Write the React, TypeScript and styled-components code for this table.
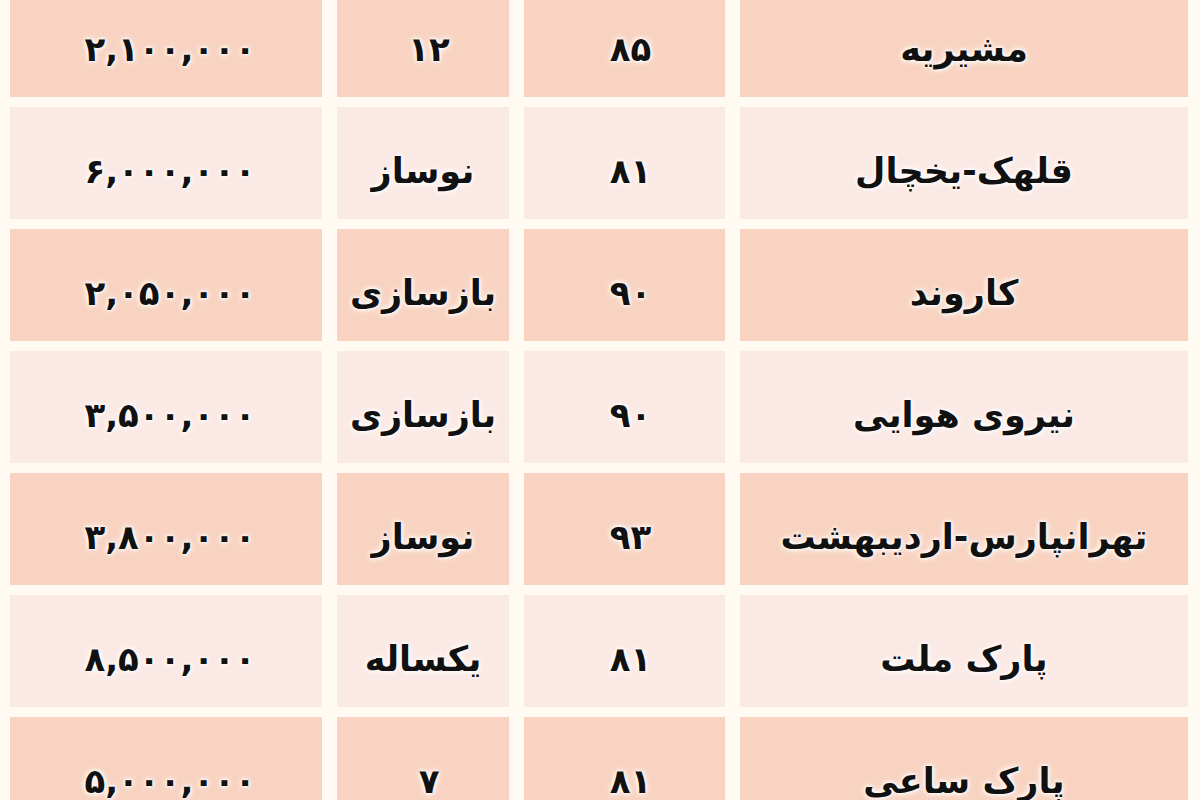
import React from "react";
import styled, { createGlobalStyle } from "styled-components";

const Global = createGlobalStyle`
  html, body {
    margin: 0;
    padding: 0;
    background: #fffaf2;
    height: 800px;
    overflow: hidden;
  }
  #root { height: 800px; overflow: hidden; }
`;

const Table = styled.div`
  direction: rtl;
  display: grid;
  grid-template-columns: 448px 201px 172px 312px;
  grid-auto-rows: 112px;
  column-gap: 15px;
  row-gap: 10px;
  margin-top: -15px;
  padding: 0 12px 0 10px;
  font-family: "DejaVu Sans", "Noto Sans", sans-serif;
`;

const Cell = styled.div<{ $tone: "peach" | "light" }>`
  display: flex;
  align-items: center;
  justify-content: center;
  padding-top: 16px;
  box-sizing: border-box;
  background: ${(p) => (p.$tone === "peach" ? "#f8d3c1" : "#fbe9e5")};
  color: #111;
  font-size: 35px;
  font-weight: bold;
  white-space: nowrap;
  text-shadow: 0 0 3px #fff, 0 0 5px #fff, 0 0 7px #fff;
`;

const Num = styled.span<{ $spacing: number }>`
  direction: ltr;
  unicode-bidi: isolate;
  letter-spacing: ${(p) => p.$spacing}px;
  padding-left: ${(p) => p.$spacing}px;
  font-size: 34px;
`;

type Row = [string, string, string, string];

const rows: Row[] = [
  ["مشیریه", "۸۵", "۱۲", "۲,۱۰۰,۰۰۰"],
  ["قلهک-یخچال", "۸۱", "نوساز", "۶,۰۰۰,۰۰۰"],
  ["کاروند", "۹۰", "بازسازی", "۲,۰۵۰,۰۰۰"],
  ["نیروی هوایی", "۹۰", "بازسازی", "۳,۵۰۰,۰۰۰"],
  ["تهرانپارس-اردیبهشت", "۹۳", "نوساز", "۳,۸۰۰,۰۰۰"],
  ["پارک ملت", "۸۱", "یکساله", "۸,۵۰۰,۰۰۰"],
  ["پارک ساعی", "۸۱", "۷", "۵,۰۰۰,۰۰۰"],
];

const isNumber = (s: string) => /^[۰-۹,]+$/.test(s);

export default function App() {
  return (
    <>
      <Global />
      <Table>
        {rows.map((r, i) => {
          const tone = i % 2 === 0 ? "peach" : "light";
          return (
            <React.Fragment key={i}>
              {r.map((v, j) => (
                <Cell key={j} $tone={tone}>
                  {isNumber(v) ? (
                    <Num $spacing={j === 3 ? 8 : 12}>{v}</Num>
                  ) : (
                    v
                  )}
                </Cell>
              ))}
            </React.Fragment>
          );
        })}
      </Table>
    </>
  );
}
